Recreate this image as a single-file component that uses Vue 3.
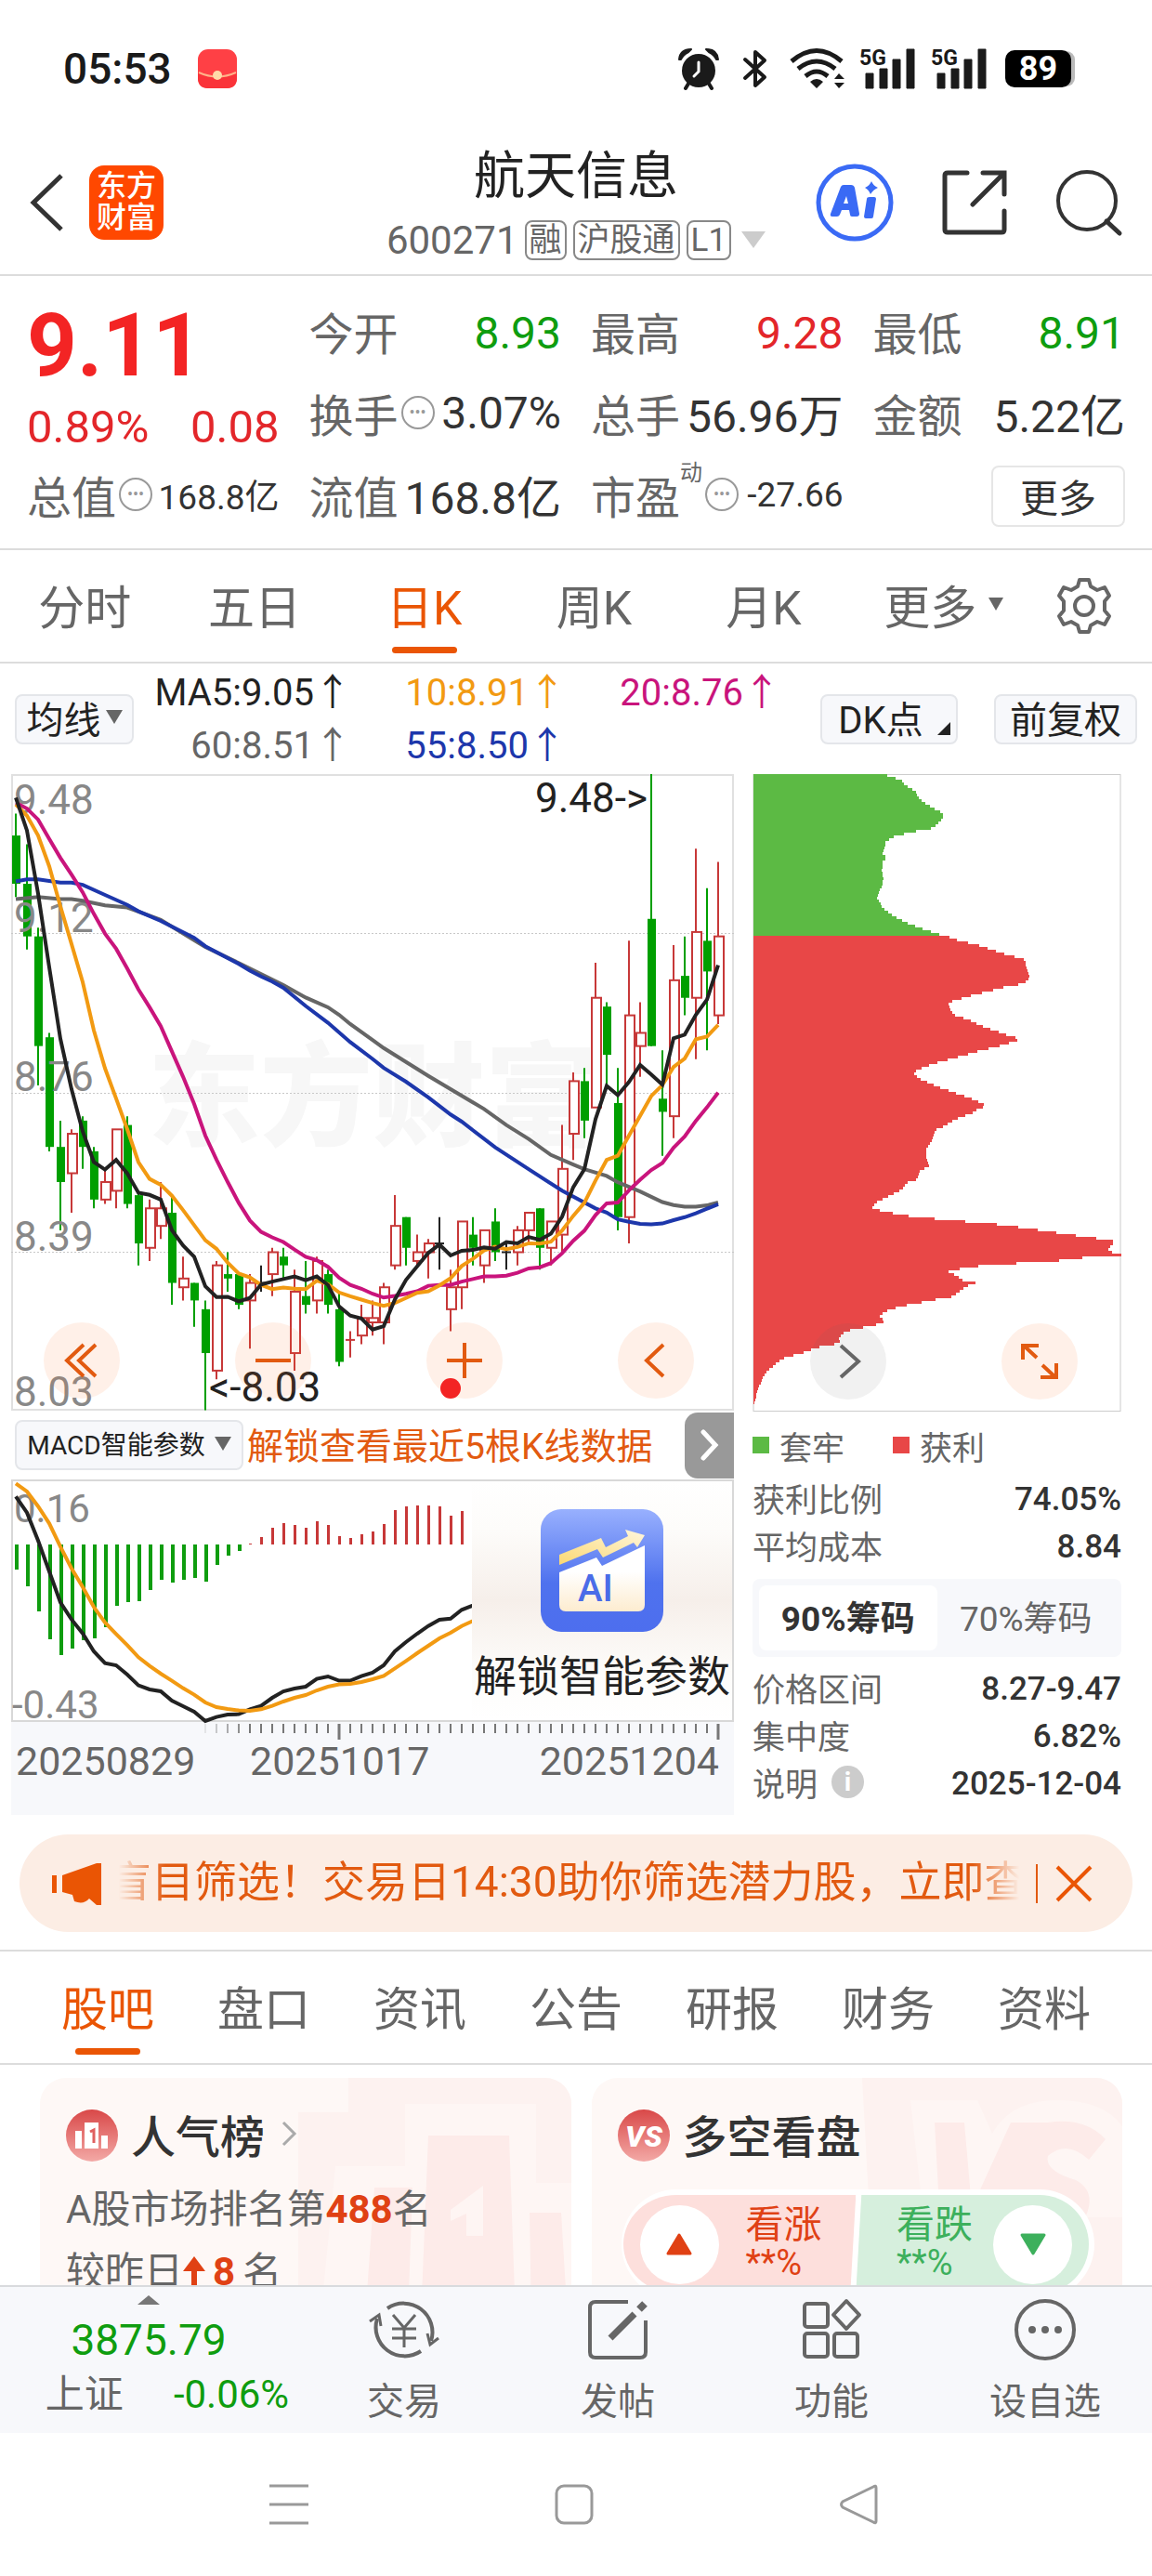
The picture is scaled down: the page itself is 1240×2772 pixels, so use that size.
<script setup>
import { ref } from 'vue'

const period = ref('日K')
const periods = ['分时', '五日', '日K', '周K', '月K']
const section = ref('股吧')
const sections = ['股吧', '盘口', '资讯', '公告', '研报', '财务', '资料']
const chipRange = ref('90%筹码')

const averages = [
  { label: 'MA5:9.05↑', tone: 'ink' },
  { label: '10:8.91↑', tone: 'amber' },
  { label: '20:8.76↑', tone: 'pink' },
  { label: '60:8.51↑', tone: 'grey' },
  { label: '55:8.50↑', tone: 'blue' }
]

const STEP = 12
const cx = (i) => 5 + STEP * i

// direction, then high / body top / body bottom / low in cents under 9.48
const rawCandles = `g 9 14 25 28|g 16 25 37 40|g 35 37 62 71|g 59 60 85 86|g 79 85 93 104|r 81 82 91 100|g 78 79 85 90|g 85 86 97 99|r 90 93 97 98|r 81 81 95 99|g 78 80 98 99|g 95 96 107 112|r 97 99 108 111|r 93 99 103 106|g 96 100 116 121|r 110 115 117 120|g 116 116 120 126|g 120 122 132 145|r 111 112 136 138|g 109 114 115 118|g 114 114 121 122|r 114 116 120 131|k 112 116 116 118|r 108 109 114 119|g 108 110 112 115|r 113 118 132 136|g 111 119 121 123|r 110 111 120 123|g 113 114 121 123|g 118 122 134 135|r 127 129 129 133|r 121 124 128 130|r 120 124 125 128|r 116 117 125 130|r 96 103 112 113|g 101 101 108 112|r 105 109 111 112|r 106 107 109 115|k 101 107 107 113|r 113 117 122 127|r 102 102 117 122|g 101 105 108 112|r 104 104 112 116|g 99 102 109 111|k 107 109 109 113|r 103 104 109 112|r 100 100 104 107|g 99 99 108 113|r 102 102 108 112|r 80 90 105 109|r 68 70 82 88|g 67 70 79 83|r 43 51 76 76|g 52 53 64 71|g 67 75 101 104|r 38 55 101 107|r 52 59 62 69|g 0 33 62 62|g 63 74 77 87|r 39 47 78 83|g 37 46 51 55|r 17 36 51 65|g 26 38 45 63|r 20 37 55 57`
const colours = { g: '#009f00', r: '#c73838', k: '#222' }
const candles = rawCandles.split('|').map((row, i) => {
  const [dir, ...v] = row.split(' ')
  const [high, top, bottom, low] = v.map((n) => Number(n) * 4.72)
  return { x: cx(i), high, top, bottom, low, flat: top === bottom, hollow: dir === 'r', colour: colours[dir] }
})

const trace = (pairs, offset, scale) =>
  pairs.map(([i, y]) => `${cx(i)},${((y - offset) * scale).toFixed(1)}`).join(' ')
const dense = (values) => values.map((v, i) => [i, v])

const ma5 = [82, 160, 310, 485, 655, 775, 875, 948, 966, 943, 975, 1021, 1026, 1037, 1110, 1146, 1173, 1243, 1269, 1268, 1279, 1271, 1239, 1232, 1226, 1220, 1229, 1220, 1240, 1291, 1313, 1320, 1346, 1338, 1275, 1228, 1196, 1164, 1144, 1170, 1159, 1157, 1151, 1154, 1138, 1141, 1126, 1133, 1118, 1078, 1008, 965, 846, 767, 789, 758, 717, 740, 764, 654, 645, 598, 562, 480]
const ma10 = [98, 125, 172, 245, 340, 430, 520, 635, 725, 797, 870, 948, 988, 1002, 1028, 1062, 1098, 1134, 1154, 1187, 1213, 1222, 1240, 1250, 1246, 1249, 1250, 1230, 1238, 1258, 1267, 1275, 1283, 1290, 1283, 1271, 1259, 1255, 1241, 1224, 1195, 1178, 1158, 1149, 1155, 1150, 1141, 1142, 1137, 1111, 1076, 1045, 992, 943, 933, 885, 838, 791, 765, 722, 702, 656, 650, 622]
const ma20 = [94, 108, 134, 180, 225, 265, 307, 358, 405, 441, 488, 538, 580, 625, 685, 745, 810, 885, 942, 995, 1045, 1087, 1114, 1127, 1138, 1156, 1173, 1181, 1197, 1223, 1240, 1249, 1261, 1270, 1266, 1261, 1255, 1242, 1240, 1240, 1232, 1226, 1220, 1220, 1218, 1211, 1201, 1198, 1188, 1165, 1135, 1111, 1074, 1046, 1044, 1015, 990, 967, 950, 914, 887, 850, 818, 783]
const ma60 = [[0, 323], [2, 318], [4, 323], [5, 323], [6, 327], [8, 338], [10, 343], [13, 372], [17, 437], [20, 475], [24, 527], [26, 557], [28, 580], [29, 598], [30, 620], [32, 658], [33, 677], [37, 743], [42, 822], [44, 860], [46, 893], [48, 931], [50, 954], [51, 965], [53, 981], [54, 996], [56, 1018], [58, 1043], [59, 1050], [60, 1054], [61, 1054], [62, 1051], [63, 1044]]
const ma55 = [[0, 281], [1, 276], [2, 276], [4, 284], [5, 284], [6, 289], [8, 313], [10, 337], [11, 352], [13, 375], [16, 415], [17, 435], [20, 477], [21, 493], [22, 507], [23, 519], [24, 534], [26, 577], [28, 617], [30, 663], [32, 703], [33, 724], [35, 757], [37, 794], [39, 835], [40, 852], [43, 913], [46, 965], [49, 1016], [52, 1058], [53, 1068], [54, 1084], [55, 1090], [56, 1095], [57, 1096], [58, 1094], [59, 1086], [60, 1079], [61, 1070], [62, 1059], [63, 1048]]
const maLines = [
  { colour: '#666', points: trace(ma60, 26, 0.4528) },
  { colour: '#1d37ab', points: trace(ma55, 26, 0.4528) },
  { colour: '#c9147c', points: trace(dense(ma20), 26, 0.4528) },
  { colour: '#f29a12', points: trace(dense(ma10), 26, 0.4528) },
  { colour: '#222', points: trace(dense(ma5), 26, 0.4528) }
]
const priceLabels = [
  { text: '9.48', y: 43 },
  { text: '9.12', y: 170 },
  { text: '8.76', y: 341 },
  { text: '8.39', y: 513 },
  { text: '8.03', y: 680 }
]

const macdBars = [27, 45, 72, 102, 119, 112, 103, 101, 89, 66, 62, 61, 49, 38, 41, 38, 36, 40, 22, 12, 7, -1, -8, -18, -23, -21, -18, -25, -21, -9, -7, -11, -14, -22, -37, -41, -42, -42, -41, -31, -36]
const dif = [298, 350, 440, 540, 640, 695, 740, 798, 836, 843, 873, 908, 921, 927, 957, 975, 993, 1023, 1010, 1002, 1001, 985, 974, 948, 927, 918, 912, 887, 879, 893, 893, 878, 867, 843, 798, 768, 741, 716, 696, 692, 664, 650]
const dea = [256, 282, 330, 385, 460, 530, 590, 655, 705, 742, 778, 817, 845, 870, 893, 917, 938, 963, 978, 984, 989, 990, 985, 974, 960, 948, 939, 924, 912, 905, 903, 897, 888, 877, 853, 829, 804, 780, 756, 738, 716, 700]
const difPoints = trace(dense(dif), 243, 0.3333)
const deaPoints = trace(dense(dea), 243, 0.3333)
const ticks = Array.from({ length: 47 }, (_, k) => ({
  x: cx(17 + k),
  major: k === 12 || k === 46,
  alpha: Math.min(1, 0.15 + k * 0.22)
}))

// outline of the chip distribution: row, extent
const outline = [[27, 440], [32, 475], [38, 495], [45, 518], [52, 520], [60, 540], [68, 555], [75, 560], [90, 575], [97, 590], [105, 605], [112, 625], [120, 642], [127, 648], [134, 642], [142, 632], [150, 620], [157, 605], [161, 570], [168, 530], [174, 490], [180, 475], [190, 458], [205, 457], [218, 448], [226, 465], [233, 450], [258, 448], [277, 452], [295, 447], [310, 437], [323, 430], [333, 442], [345, 450], [352, 465], [362, 480], [370, 500], [378, 520], [385, 545], [392, 570], [400, 600], [407, 630], [411, 640], [415, 670], [424, 700], [430, 740], [437, 775], [445, 805], [452, 830], [460, 870], [467, 905], [472, 912], [490, 915], [510, 925], [517, 920], [525, 905], [532, 850], [540, 810], [549, 760], [557, 720], [564, 690], [570, 660], [580, 665], [590, 672], [602, 685], [608, 720], [615, 740], [622, 760], [630, 785], [640, 825], [648, 855], [653, 880], [660, 885], [667, 855], [675, 820], [683, 770], [692, 730], [700, 690], [707, 655], [714, 620], [722, 590], [730, 560], [738, 550], [745, 558], [755, 580], [762, 605], [770, 625], [778, 660], [786, 690], [795, 725], [803, 750], [810, 777], [818, 775], [825, 755], [835, 735], [842, 700], [850, 680], [857, 665], [865, 645], [872, 622], [885, 615], [897, 610], [910, 598], [920, 590], [940, 590], [950, 597], [960, 600], [967, 575], [975, 567], [990, 560], [998, 530], [1010, 517], [1020, 500], [1028, 475], [1037, 450], [1045, 430], [1057, 418], [1063, 435], [1068, 470], [1075, 510], [1081, 580], [1088, 680], [1094, 780], [1100, 860], [1106, 910], [1112, 970], [1118, 1020], [1124, 1080], [1130, 1140], [1135, 1190], [1140, 1200], [1148, 1187], [1160, 1175], [1165, 1200], [1170, 1221], [1176, 1100], [1182, 1040], [1188, 920], [1193, 800], [1200, 710], [1205, 690], [1211, 655], [1217, 685], [1225, 700], [1232, 715], [1237, 758], [1243, 725], [1252, 705], [1262, 688], [1270, 670], [1276, 620], [1283, 570], [1290, 520], [1297, 485], [1305, 455], [1314, 440], [1327, 458], [1335, 430], [1341, 395], [1347, 350], [1354, 325], [1365, 310], [1380, 312], [1385, 260], [1395, 220], [1405, 180], [1412, 140], [1422, 115], [1435, 95], [1450, 72], [1470, 58], [1490, 47], [1510, 40], [1532, 33]]
const extentAt = (y) => {
  const k = outline.findIndex(([row]) => row >= y)
  if (k <= 0) return k === 0 ? outline[0][1] : 33
  const [y0, x0] = outline[k - 1]
  const [y1, x1] = outline[k]
  return x0 + ((x1 - x0) * (y - y0)) / (y1 - y0)
}
const chipBars = Array.from({ length: 228 }, (_, k) => ({
  y: k * 3,
  width: Math.max(0, Math.round((extentAt(26 + (k * 3 + 2) * 2.208) - 33) / 3)),
  colour: k < 58 ? '#5cba44' : '#e84747'
}))

const shortcuts = ['交易', '发帖', '功能', '设自选']
</script>

<template>
  <div class="page">
    <div class="status">
      <span class="clock">05:53</span>
      <svg class="packet" width="42" height="42" viewBox="0 0 42 42">
        <rect width="42" height="42" rx="11" fill="#ff4045" />
        <path d="M0 25 Q21 34 42 25 V31 Q42 42 31 42 H11 Q0 42 0 31Z" fill="#fa3339" />
        <path d="M1 25 Q21 34 41 25" fill="none" stroke="#ffb38a" stroke-width="2" />
        <circle cx="21" cy="28" r="5" fill="#ffd9a8" />
      </svg>
      <div class="status-icons">
        <svg class="alarm" width="44" height="46" viewBox="0 0 44 46">
          <circle cx="22" cy="25" r="18" fill="#1a1a1a" />
          <path d="M1 13 Q2 2 14 2 L11 5 Q5 8 3 13Z M43 13 Q42 2 30 2 L33 5 Q39 8 41 13Z" fill="#1a1a1a" stroke="#1a1a1a" stroke-width="2" stroke-linejoin="round" />
          <path d="M11 39 L8 44 M33 39 L36 44" fill="none" stroke="#1a1a1a" stroke-width="4" stroke-linecap="round" />
          <path d="M22 16 V26 L17 31" fill="none" stroke="#fff" stroke-width="3" stroke-linecap="round" />
        </svg>
        <svg class="bt" width="26" height="44" viewBox="0 0 26 44">
          <path d="M2 12 L23 31 L13 40 V4 L23 13 L2 32" fill="none" stroke="#1a1a1a" stroke-width="4" stroke-linejoin="round" stroke-linecap="round" />
        </svg>
        <svg class="wifi" width="60" height="44" viewBox="0 0 60 44">
          <path d="M2 14 Q29 -9 56 14 M9 22 Q29 6 49 22 M17 30 Q29 20 41 30" fill="none" stroke="#1a1a1a" stroke-width="5" />
          <path d="M29 43 L22 36 Q29 30 36 36Z M48 33 L53 27 L59 33Z M48 37 L53 43 L59 37Z" fill="#1a1a1a" />
        </svg>
        <svg v-for="n in 2" :key="n" class="signal" width="62" height="44" viewBox="0 0 62 44">
          <text x="0" y="18" class="net">5G</text>
          <path d="M7 27 h8 v16 h-8z M22 22 h8 v21 h-8z M36 12 h8 v31 h-8z M51 1 h8 v42 h-8z" fill="#1a1a1a" stroke="#1a1a1a" stroke-linejoin="round" />
        </svg>
        <span class="battery">89</span>
      </div>
    </div>

    <header class="header">
      <div class="header-side">
        <button class="bare back" aria-label="返回">
          <svg width="36" height="62" viewBox="0 0 36 62"><path d="M34 2 L4 31 L34 60" fill="none" stroke="#333" stroke-width="5" /></svg>
        </button>
        <a href="#" class="brand">东方<br />财富</a>
      </div>
      <div class="heading">
        <h1>航天信息</h1>
        <div class="code">
          <span>600271</span>
          <span class="tag">融</span><span class="tag">沪股通</span><span class="tag">L1</span>
          <i class="caret pale"></i>
        </div>
      </div>
      <div class="header-side end">
        <button class="bare" aria-label="AI">
          <svg width="84" height="84" viewBox="0 0 84 84">
            <circle cx="42" cy="42" r="39" fill="none" stroke="#3a6af5" stroke-width="5" />
            <path d="M30 23 H38 Q41 23 42 26 L47 54 Q47 57 44 57 H39 Q37 57 37 55 L36 50 H28 L26 55 Q25 57 23 57 H18 Q15 57 16 54 L27 25 Q28 23 30 23Z M33 35 L30 43 H35Z" fill="#3a6af5" fill-rule="evenodd" />
            <path d="M58 36 H63 Q65 36 65 38 L62 57 Q62 59 60 59 H54 Q52 59 52 57 L55 38 Q55 36 58 36Z" fill="#3a6af5" />
            <path d="M60 19 Q62 24 67 26 Q62 28 59 33 Q57 28 53 26 Q58 24 60 19Z" fill="#3a6af5" />
          </svg>
        </button>
        <button class="bare" aria-label="分享">
          <svg width="70" height="70" viewBox="0 0 70 70"><path d="M27 3 H6 Q3 3 3 6 V64 Q3 67 6 67 H64 Q67 67 67 64 V44 M44 3 H67 V26 M66 4 L33 37" fill="none" stroke="#333" stroke-width="5" stroke-linecap="round" /></svg>
        </button>
        <button class="bare" aria-label="搜索">
          <svg width="72" height="70" viewBox="0 0 72 70"><circle cx="34" cy="33" r="31" fill="none" stroke="#333" stroke-width="4" /><path d="M55 55 L69 68" stroke="#333" stroke-width="5" stroke-linecap="round" /></svg>
        </button>
      </div>
    </header>

    <section class="quote">
      <div class="last">
        <strong>9.11</strong>
        <div class="change"><span>0.89%</span><span>0.08</span></div>
      </div>
      <div class="cell"><span>今开</span><b class="down">8.93</b></div>
      <div class="cell"><span>最高</span><b class="up">9.28</b></div>
      <div class="cell"><span>最低</span><b class="down">8.91</b></div>
      <div class="cell"><span class="with-dots">换手<i class="dots">•••</i></span><b>3.07%</b></div>
      <div class="cell"><span>总手</span><b>56.96万</b></div>
      <div class="cell"><span>金额</span><b>5.22亿</b></div>
      <div class="cell"><span class="with-dots">总值<i class="dots">•••</i></span><b class="small">168.8亿</b></div>
      <div class="cell"><span>流值</span><b>168.8亿</b></div>
      <div class="cell"><span class="with-dots">市盈<sup>动</sup><i class="dots">•••</i></span><b class="small">-27.66</b></div>
      <div class="cell last-cell"><button class="more">更多</button></div>
    </section>

    <nav class="tabs periods">
      <button v-for="p in periods" :key="p" class="tab" :class="{ active: p === period }" @click="period = p">{{ p }}</button>
      <button class="tab wide">更多<i class="caret tiny"></i></button>
      <button class="bare gear" aria-label="设置">
        <svg width="62" height="62" viewBox="0 0 62 62">
          <path d="M26 3 H36 L38 10 L45 14 L53 11 L58 20 L53 26 V36 L58 42 L53 51 L45 48 L38 52 L36 59 H26 L24 52 L17 48 L9 51 L4 42 L9 36 V26 L4 20 L9 11 L17 14 L24 10Z" fill="none" stroke="#666" stroke-width="4" stroke-linejoin="round" />
          <circle cx="31" cy="31" r="10" fill="none" stroke="#666" stroke-width="4" />
        </svg>
      </button>
    </nav>

    <div class="ma-row">
      <button class="chip-btn">均线<i class="caret mid"></i></button>
      <div class="averages"><span v-for="a in averages" :key="a.label" :class="a.tone">{{ a.label }}</span></div>
      <button class="chip-btn dk">DK点<i class="corner"></i></button>
      <button class="chip-btn adj">前复权</button>
    </div>

    <main class="charts">
      <div class="left">
        <div class="plot">
          <svg viewBox="0 0 778 685" class="canvas">
            <rect x="1" y="1" width="776" height="683" fill="#fff" stroke="#e0e0e0" stroke-width="2" />
            <text x="147" y="390" class="watermark">东方财富</text>
            <path d="M0 171.5 H778 M0 343.5 H778 M0 514.5 H778" stroke="#c8c8c8" stroke-dasharray="2 2" />
            <g v-for="c in candles" :key="c.x" :stroke="c.colour" stroke-width="2">
              <path :d="`M${c.x} ${c.high} V${c.low}`" />
              <path v-if="c.flat" :d="`M${c.x - 5} ${c.top} H${c.x + 5}`" />
              <rect v-else-if="c.hollow" :x="c.x - 4" :y="c.top" width="10" :height="c.bottom - c.top" fill="#fff" />
              <rect v-else :x="c.x - 4" :y="c.top" width="9" :height="c.bottom - c.top" :fill="c.colour" stroke="none" />
            </g>
            <text v-for="l in priceLabels" :key="l.text" x="3" :y="l.y" class="price">{{ l.text }}</text>
            <polyline v-for="m in maLines" :key="m.colour" :points="m.points" fill="none" :stroke="m.colour" stroke-width="4" />
            <text x="564" y="41" class="mark">9.48-&gt;</text>
            <text x="213" y="675" class="mark">&lt;-8.03</text>
          </svg>
          <div class="tools">
            <button class="round" aria-label="最早"><svg width="40" height="40" viewBox="0 0 40 40"><path d="M22 3 L4 20 L22 37 M35 3 L17 20 L35 37" /></svg></button>
            <button class="round" aria-label="缩小"><svg width="40" height="40" viewBox="0 0 40 40"><path d="M1 20 H39" /></svg></button>
            <button class="round" aria-label="放大"><svg width="40" height="40" viewBox="0 0 40 40"><path d="M1 20 H39 M20 1 V39" /></svg><i class="dot"></i></button>
            <button class="round" aria-label="向左"><svg width="40" height="40" viewBox="0 0 40 40"><path d="M28 3 L10 20 L28 37" /></svg></button>
          </div>
        </div>
        <div class="macd-row">
          <button class="chip-btn macd">MACD智能参数<i class="caret mid"></i></button>
          <a href="#" class="unlock">解锁查看最近5根K线数据</a>
          <button class="next" aria-label="下一个"><svg width="22" height="36" viewBox="0 0 22 36"><path d="M4 4 L17 18 L4 32" fill="none" stroke="#fff" stroke-width="5" stroke-linecap="round" /></svg></button>
        </div>
        <div class="plot">
          <svg viewBox="0 0 778 261" class="canvas">
            <rect x="1" y="1" width="776" height="259" fill="#fff" stroke="#d8d8d8" stroke-width="2" />
            <text x="3" y="46" class="scale">0.16</text>
            <text x="1" y="257" class="scale">-0.43</text>
            <rect v-for="(b, i) in macdBars" :key="i" :x="cx(i) - 1" :y="b > 0 ? 70 : 70 + b" :width="b > 0 ? 4 : 3" :height="Math.abs(b)" :fill="b > 0 ? '#0f9d0f' : '#c73838'" />
            <polyline :points="difPoints" fill="none" stroke="#222" stroke-width="4" />
            <polyline :points="deaPoints" fill="none" stroke="#f29a12" stroke-width="4" />
          </svg>
          <button class="smart">
            <svg width="132" height="132" viewBox="0 0 132 132">
              <defs>
                <linearGradient id="tile" x1="0" y1="0" x2="0" y2="1"><stop offset="0" stop-color="#98b0fe" /><stop offset=".6" stop-color="#4f72ee" /><stop offset="1" stop-color="#4d6eee" /></linearGradient>
                <linearGradient id="sheet" x1="0" y1="0" x2="0" y2="1"><stop offset=".4" stop-color="#fff" /><stop offset="1" stop-color="#fdeccf" /></linearGradient>
                <linearGradient id="gold" x1="0" y1="1" x2="1" y2="0"><stop offset="0" stop-color="#fbd873" /><stop offset="1" stop-color="#fff6dd" /></linearGradient>
              </defs>
              <rect width="132" height="132" rx="22" fill="url(#tile)" />
              <path d="M20 68 L60 52 L66 61 L112 39 V103 Q112 110 105 110 H27 Q20 110 20 103Z" fill="url(#sheet)" />
              <path d="M20 49 L65 31 L70 41 L94 29 L91 22 L112 28 L104 41 L100 36 L67 52 L61 43 L20 60Z" fill="url(#gold)" />
              <text x="40" y="99" class="ai-word">AI</text>
            </svg>
            <span>解锁智能参数</span>
          </button>
        </div>
        <svg viewBox="0 0 778 100" class="canvas axis">
          <path v-for="t in ticks" :key="t.x" :d="`M${t.x} 2 V${t.major ? 19 : 12}`" stroke="#777" :stroke-width="t.major ? 3 : 2" :opacity="t.alpha" />
          <text x="5" y="57">20250829</text>
          <text x="257" y="57">20251017</text>
          <text x="762" y="57" text-anchor="end">20251204</text>
        </svg>
      </div>

      <aside class="right">
        <div class="plot">
          <svg viewBox="0 0 397 686" class="canvas">
            <rect x="1" y="0.5" width="395" height="685" fill="#fff" stroke="#ccc" />
            <rect v-for="b in chipBars" :key="b.y" x="1" :y="b.y" :width="b.width" height="3" :fill="b.colour" shape-rendering="crispEdges" />
          </svg>
          <div class="tools chips">
            <button class="round quiet" aria-label="向右"><svg width="40" height="40" viewBox="0 0 40 40"><path d="M12 3 L31 20 L12 37" /></svg></button>
            <button class="round" aria-label="全屏"><svg width="40" height="40" viewBox="0 0 40 40"><path d="M2 18 V3 H19 M3 3 L17 16 M38 22 V37 H21 M37 37 L23 24" /></svg></button>
          </div>
        </div>
        <div class="legend"><span><i class="green"></i>套牢</span><span><i class="red"></i>获利</span></div>
        <dl>
          <div><dt>获利比例</dt><dd>74.05%</dd></div>
          <div><dt>平均成本</dt><dd>8.84</dd></div>
        </dl>
        <div class="toggle">
          <button v-for="c in ['90%筹码', '70%筹码']" :key="c" :class="{ on: c === chipRange }" @click="chipRange = c">{{ c }}</button>
        </div>
        <dl>
          <div><dt>价格区间</dt><dd>8.27-9.47</dd></div>
          <div><dt>集中度</dt><dd>6.82%</dd></div>
          <div><dt>说明<i class="info">i</i></dt><dd>2025-12-04</dd></div>
        </dl>
      </aside>
    </main>

    <div class="promo">
      <svg class="horn" width="54" height="46" viewBox="0 0 54 46"><path d="M0 14 H5 V33 H0Z M11 14 L48 1 H53 V46 H48 L40 39 Q34 46 24 42 L22 35 L11 32Z" fill="#ea5504" /></svg>
      <a href="#" class="ticker"><span>盲目筛选！交易日14:30助你筛选潜力股，立即查看</span></a>
      <i class="bar"></i>
      <button class="bare" aria-label="关闭"><svg width="38" height="38" viewBox="0 0 38 38"><path d="M1 1 L37 37 M37 1 L1 37" stroke="#ea5504" stroke-width="4" /></svg></button>
    </div>

    <nav class="tabs sections">
      <button v-for="s in sections" :key="s" class="tab" :class="{ active: s === section }" @click="section = s">{{ s }}</button>
    </nav>

    <section class="cards">
      <article class="card">
        <svg class="backdrop" viewBox="0 0 330 260" width="330" height="260">
          <path d="M90 0 H330 V260 H36 V37 H90Z" fill="#fdf2f0" />
          <path d="M76 95 H151 V28 H292 V113 H330 V260 H60Z" fill="#fef6f4" />
          <path d="M176 62 H263 L270 260 H168Z M118 118 H159 L154 260 H108Z M285 145 H319 L326 260 H287Z" fill="#fdebe9" />
          <path d="M200 142 L235 116 V170 H217 V146 L200 154Z" fill="#fef5f3" />
        </svg>
        <h2>
          <svg class="badge" width="56" height="56" viewBox="0 0 56 56">
            <defs><linearGradient id="badge" x1="0" y1="0" x2="0" y2="1"><stop offset="0" stop-color="#d94848" /><stop offset="1" stop-color="#f3a9a6" /></linearGradient></defs>
            <circle cx="28" cy="28" r="28" fill="url(#badge)" />
            <path d="M10 23 H17 V42 H10Z M20 14 H35 V42 H20Z M38 28 H45 V42 H38Z" fill="#fff" />
            <path d="M26 24 L30 22 V36" fill="none" stroke="#e06060" stroke-width="3" />
          </svg>
          人气榜
          <svg class="chev" width="18" height="28" viewBox="0 0 18 28"><path d="M2 2 L14 14 L2 26" fill="none" stroke="#aaa" stroke-width="3" /></svg>
        </h2>
        <p>A股市场排名第<b>488</b>名</p>
        <p>较昨日<svg class="rise" width="24" height="34" viewBox="0 0 24 34"><path d="M12 0 L24 16 H15 V34 H9 V16 H0Z" fill="#e04114" /></svg><b class="gap">8</b>名</p>
      </article>
      <article class="card">
        <svg class="backdrop" viewBox="0 0 280 260" width="280" height="260">
          <path d="M0 0 H280 V260 H14Z" fill="#fdf2f0" />
          <path d="M52 24 H124 L140 60 Q160 24 210 24 Q260 24 280 52 V150 H66Z" fill="#fef6f4" />
          <path d="M78 48 H110 L118 140 L160 48 H200 Q240 42 262 66 L244 88 Q220 66 200 84 Q196 100 230 110 Q256 124 236 158 H84Z" fill="#fdebe9" />
        </svg>
        <h2>
          <svg class="badge" width="56" height="56" viewBox="0 0 56 56"><circle cx="28" cy="28" r="28" fill="url(#badge)" /><text x="8" y="40" class="vs">VS</text></svg>
          多空看盘
        </h2>
        <div class="vote">
          <button class="bull">
            <span class="disc"><svg width="28" height="24" viewBox="0 0 28 24"><path d="M14 2 L26 22 H2Z" fill="#e04114" stroke="#e04114" stroke-width="3" stroke-linejoin="round" /></svg></span>
            <span class="side">看涨<small>**%</small></span>
          </button>
          <button class="bear">
            <span class="side">看跌<small>**%</small></span>
            <span class="disc"><svg width="28" height="24" viewBox="0 0 28 24"><path d="M2 2 H26 L14 22Z" fill="#3db05c" stroke="#3db05c" stroke-width="3" stroke-linejoin="round" /></svg></span>
          </button>
        </div>
      </article>
    </section>

    <footer class="dock">
      <a href="#" class="index">
        <i class="peak"></i>
        <span class="points">3875.79</span>
        <span class="index-row"><span>上证</span><span class="down">-0.06%</span></span>
      </a>
      <button v-for="(s, i) in shortcuts" :key="s" class="shortcut">
        <svg width="76" height="68" viewBox="0 0 76 68" fill="none" stroke="#666" stroke-width="4">
          <template v-if="i === 0">
            <path d="M20 11 A31 31 0 0 1 67 46 M56 57 A31 31 0 0 1 9 22" />
            <path d="M1 25 L11 18 L13 30 M75 43 L66 50 L63 38" stroke-width="3" />
            <path d="M26 18 L38 32 L50 18 M38 32 V53 M25 33 H51 M25 43 H51" stroke-width="3" />
          </template>
          <template v-else-if="i === 1">
            <path d="M49 4 H14 Q8 4 8 10 V58 Q8 64 14 64 H62 Q68 64 68 58 V24" />
            <path d="M30 43 L56 17" stroke-width="7" /><path d="M61 12 L67 6" stroke-width="8" />
          </template>
          <template v-else-if="i === 2">
            <rect x="9" y="6" width="25" height="25" rx="3" /><rect x="9" y="38" width="25" height="25" rx="3" /><rect x="41" y="38" width="25" height="25" rx="3" />
            <path d="M54 3 L68 18 L54 33 L40 18Z" stroke-linejoin="round" />
          </template>
          <template v-else>
            <circle cx="38" cy="34" r="31" />
            <circle cx="24" cy="34" r="2" /><circle cx="38" cy="34" r="2" /><circle cx="52" cy="34" r="2" />
          </template>
        </svg>
        {{ s }}
      </button>
    </footer>
    <div class="system">
      <button class="bare" aria-label="任务"><svg width="42" height="44" viewBox="0 0 42 44"><path d="M0 2 H42 M0 22 H42 M0 42 H42" stroke="#999" stroke-width="3" /></svg></button>
      <button class="bare" aria-label="主页"><svg width="42" height="44" viewBox="0 0 42 44"><rect x="2" y="2" width="38" height="40" rx="8" fill="none" stroke="#999" stroke-width="3" /></svg></button>
      <button class="bare" aria-label="后退"><svg width="42" height="44" viewBox="0 0 42 44"><path d="M40 4 V40 Q40 43 37 41 L4 25 Q1 22 4 19 L37 3 Q40 1 40 4Z" fill="none" stroke="#999" stroke-width="3" /></svg></button>
    </div>
  </div>
</template>

<style>
body { margin: 0; background: #fff; }
</style>

<style scoped>
* { box-sizing: border-box; }
.page { height: 100vh; display: flex; flex-direction: column; overflow: hidden; background: #fff; color: #333; font-family: Roboto, "Noto Sans CJK SC", sans-serif; font-size: 40px; }
.page > * { flex-shrink: 0; }
button { font: inherit; color: inherit; padding: 0; margin: 0; border: 0; background: none; cursor: pointer; white-space: nowrap; }
a { color: inherit; text-decoration: none; }
i { font-style: normal; }
svg { display: block; flex-shrink: 0; overflow: visible; }
.bare { display: flex; align-items: center; }
.up { color: #e3262a; }
.down { color: #0f9d0f; }

.status { height: 140px; padding: 8px 87px 0 68px; display: flex; align-items: center; }
.clock { font-size: 46px; font-weight: 500; color: #1a1a1a; }
.packet { margin-left: 28px; }
.status-icons { margin-left: auto; display: flex; align-items: center; }
.bt { margin-left: 26px; }
.wifi { margin-left: 24px; }
.signal { margin-left: 15px; }
.net { font-size: 23px; font-weight: 700; fill: #1a1a1a; }
.battery { margin-left: 18px; width: 71px; height: 40px; line-height: 40px; border-radius: 10px; background: #000; color: #fff; font-size: 36px; font-weight: 700; text-align: center; box-shadow: 5px 0 0 -1px #bbb; }

.header { height: 157px; display: grid; grid-template-columns: 1fr auto 1fr; align-items: center; padding: 0 32px; border-bottom: 2px solid #dcdcdc; }
.header-side { display: flex; align-items: center; gap: 28px; }
.end { justify-content: flex-end; gap: 52px; }
.brand { width: 80px; height: 80px; border-radius: 16px; background: #ff4800; color: #fff; font-size: 32px; line-height: 34px; font-weight: 500; text-align: center; padding-top: 5px; }
.heading { padding-top: 5px; }
h1 { margin: 0; font-size: 55px; line-height: 76px; font-weight: 400; text-align: center; color: #222; }
.code { height: 62px; display: flex; align-items: center; gap: 7px; color: #666; font-size: 42px; }
.tag { height: 43px; line-height: 39px; border: 2px solid #888; border-radius: 8px; padding: 0 3px; font-size: 35px; }
.caret { display: inline-block; width: 0; height: 0; border-style: solid; border-color: #666 transparent transparent; }
.pale { border-width: 18px 13px 0; border-top-color: #ccc; margin-left: 4px; }
.tiny { border-width: 14px 8px 0; margin-left: 13px; }
.mid { border-width: 15px 9px 0; }

.quote { display: grid; grid-template-columns: repeat(4, 1fr); grid-auto-rows: 88px; column-gap: 32px; padding: 17px 29px 12px; border-bottom: 2px solid #dcdcdc; }
.last { grid-row: span 2; color: #e3262a; }
.last strong { display: block; height: 116px; line-height: 116px; font-size: 94px; font-weight: 700; color: #f32424; }
.change { display: flex; justify-content: space-between; height: 60px; line-height: 60px; font-size: 49px; }
.cell { display: flex; align-items: center; justify-content: space-between; font-size: 48px; color: #666; white-space: nowrap; }
.cell b { font-weight: 400; }
.cell > span { padding-bottom: 5px; }
.cell b:not(.up):not(.down) { color: #333; padding-bottom: 4px; }
.cell .small { font-size: 37px; }
.with-dots { display: flex; align-items: center; }
.dots { width: 36px; height: 36px; margin-left: 3px; border: 2px solid #999; border-radius: 50%; color: #999; font-size: 18px; line-height: 32px; text-align: center; }
sup { font-size: 24px; line-height: 24px; align-self: flex-start; }
.last-cell { justify-content: flex-end; }
.more { width: 144px; height: 66px; padding-bottom: 5px; border: 2px solid #e6e6e6; border-radius: 8px; font-size: 41px; color: #333; }

.tabs { height: 122px; display: flex; align-items: center; border-bottom: 2px solid #dcdcdc; }
.tab { position: relative; height: 100%; padding-bottom: 4px; flex: 1; font-size: 50px; color: #666; }
.active { color: #ea5504; }
.active::after { content: ""; position: absolute; left: 50%; bottom: 9px; width: 70px; margin-left: -35px; height: 7px; border-radius: 4px; background: #ea5504; }
.periods { padding-right: 42px; }
.periods .tab { flex: 183; }
.periods .wide { flex: 205; display: flex; align-items: center; justify-content: center; }
.gear { margin-left: 18px; }
.sections { padding: 0 32px; border-top: 2px solid #dcdcdc; height: 124px; }

.ma-row { height: 119px; display: flex; align-items: center; padding: 0 16px; }
.chip-btn { height: 54px; padding-bottom: 4px; border: 2px solid #e4e6ea; border-radius: 8px; background: #f7f8fb; color: #222; font-size: 40px; display: flex; align-items: center; justify-content: center; gap: 5px; }
.ma-row .chip-btn { width: 128px; }
.ma-row .dk { width: 148px; margin-left: auto; position: relative; padding-right: 18px; }
.ma-row .adj { width: 154px; margin-left: 39px; }
.corner { position: absolute; right: 6px; bottom: 8px; border-style: solid; border-width: 0 0 14px 14px; border-color: transparent transparent #222; }
.averages { margin-left: 3px; display: grid; grid-template-columns: repeat(3, 231px); justify-items: end; line-height: 57px; }
.ink { color: #222; }
.amber { color: #f29a12; }
.pink { color: #c9147c; }
.grey { color: #666; }
.blue { color: #1d37ab; }

.charts { display: grid; grid-template-columns: 778fr 397fr; gap: 20px; padding: 0 33px 0 12px; align-items: start; }
.plot { position: relative; }
.canvas { width: 100%; height: auto; }
.price { font-size: 44px; fill: #888; }
.mark { font-size: 44px; fill: #222; }
.scale { font-size: 42px; fill: #888; }
.watermark { font-size: 121px; font-weight: 900; fill: #f7f7f7; }
.tools { position: absolute; left: 35px; right: 43px; bottom: 13px; display: flex; justify-content: space-between; }
.chips { left: 62px; right: 47px; }
.round { position: relative; width: 82px; height: 82px; border-radius: 50%; background: rgba(255, 118, 48, .11); display: flex; align-items: center; justify-content: center; }
.round svg { fill: none; stroke: #e25a10; stroke-width: 4; }
.quiet { background: rgba(102, 102, 102, .09); }
.quiet svg { stroke: #666; }
.dot { position: absolute; left: 15px; bottom: 0; width: 22px; height: 22px; border-radius: 50%; background: #f32424; }
.macd-row { height: 74px; display: flex; align-items: center; padding-left: 4px; }
.macd { width: 246px; font-size: 28px; gap: 10px; }
.unlock { margin-left: 4px; padding-bottom: 4px; font-size: 39px; color: #e25a10; white-space: nowrap; }
.next { margin-left: auto; width: 53px; height: 71px; border-radius: 14px 0 0 14px; background: #999; display: flex; align-items: center; justify-content: center; }
.smart { position: absolute; top: 2px; right: 2px; bottom: 2px; width: 36%; display: flex; flex-direction: column; align-items: center; padding-top: 30px; font-size: 46px; line-height: 60px; gap: 18px; color: #222; background: linear-gradient(#fff, #fdfcfa 20%, #f6efea 50%, #fdfcfa 80%, #fff); }
.ai-word { font-size: 40px; font-weight: 500; fill: #4a6ce8; }
.axis { background: #f7f8fb; }
.axis text { font-size: 43px; fill: #666; }

.legend { height: 69px; padding-top: 3px; display: flex; align-items: center; gap: 52px; font-size: 35px; color: #666; }
.legend span { display: flex; align-items: center; gap: 11px; }
.legend i { width: 18px; height: 18px; }
.green { background: #5cba44; }
.red { background: #e84747; }
dl { margin: 0; }
dl div { display: flex; justify-content: space-between; align-items: center; height: 51px; font-size: 35px; }
dt { color: #666; display: flex; align-items: center; padding-bottom: 4px; }
dd { margin: 0; font-weight: 500; color: #333; }
.info { width: 35px; height: 35px; margin-left: 15px; border-radius: 50%; background: #ccc; color: #fff; font-size: 28px; line-height: 35px; font-weight: 700; text-align: center; }
.toggle { height: 84px; margin: 9px 0; padding: 7px; border-radius: 8px; background: #f7f8fb; display: flex; }
.toggle button { flex: 1; border-radius: 8px; padding-bottom: 4px; font-size: 37px; color: #666; }
.toggle .on { background: #fff; color: #333; font-weight: 700; }

.promo { height: 105px; margin: 21px 21px 19px; padding: 0 44px 0 35px; border-radius: 53px; background: #fcede4; color: #e25a10; display: flex; align-items: center; }
.ticker { flex: 1; min-width: 0; margin-left: 18px; padding-bottom: 3px; overflow: hidden; white-space: nowrap; font-size: 46px; line-height: 70px; mask-image: linear-gradient(90deg, transparent, #000 50px, #000 calc(100% - 50px), transparent); }
.ticker span { display: block; margin-left: -11px; }
.bar { width: 2px; height: 42px; margin: 0 20px 0 18px; background: #e25a10; }

.page > .cards { flex: 1 1 0; min-height: 0; overflow: hidden; display: grid; grid-template-columns: 1fr 1fr; gap: 22px; padding: 14px 32px 0 43px; align-items: start; }
.card { position: relative; height: 300px; padding: 30px 28px 0; border-radius: 28px; background: #fef8f6; overflow: hidden; }
.backdrop { position: absolute; top: 0; right: 0; }
h2 { position: relative; margin: 0; height: 64px; padding-bottom: 5px; display: flex; align-items: center; gap: 14px; font-size: 48px; font-weight: 500; color: #333; }
.badge { margin-top: 5px; }
.chev { margin-left: 4px; }
.card p { position: relative; margin: 0; height: 67px; line-height: 67px; font-size: 42px; color: #666; display: flex; align-items: center; }
.card h2 + p { margin-top: 14px; }
.card b { color: #e04114; font-weight: 700; }
.card .gap { margin: 0 8px; }
.vote { position: relative; height: 118px; margin: 26px 2px 0 4px; border: 6px solid #fff; border-left-width: 2px; border-radius: 59px; overflow: hidden; display: flex; background: #fff; }
.bull, .bear { flex: 1; display: flex; align-items: center; padding: 0 18px; }
.bull { gap: 29px; background: #fddfdc; color: #e04114; clip-path: polygon(0 0, 100% 0, calc(100% - 6px) 100%, 0 100%); }
.bear { gap: 22px; justify-content: flex-end; background: #d6efdd; color: #3db05c; clip-path: polygon(6px 0, 100% 0, 100% 100%, 0 100%); }
.disc { width: 85px; height: 85px; border-radius: 50%; background: #fff; display: flex; align-items: center; justify-content: center; }
.side { display: flex; flex-direction: column; align-items: flex-start; padding-bottom: 4px; font-size: 41px; line-height: 44px; }
.side small { font-size: 38px; line-height: 38px; }
.vs { font-size: 32px; font-weight: 900; font-style: italic; fill: #fff; }

.dock { height: 159px; display: flex; background: #f7f8fb; border-top: 2px solid #d8dadd; color: #666; }
.index { flex: 320; display: flex; flex-direction: column; align-items: center; color: #666; padding-top: 9px; }
.peak { border-style: solid; border-width: 0 12px 10px; border-color: transparent transparent #777; }
.points { font-size: 46px; line-height: 60px; margin-top: 8px; color: #0f9d0f; }
.index-row { display: flex; gap: 54px; line-height: 58px; padding-left: 40px; font-size: 42px; }
.shortcut { flex: 230; display: flex; flex-direction: column; align-items: center; padding-top: 12px; gap: 14px; line-height: 60px; font-size: 40px; }
.system { height: 154px; display: flex; align-items: center; justify-content: space-between; padding: 0 295px 0 290px; }
</style>
